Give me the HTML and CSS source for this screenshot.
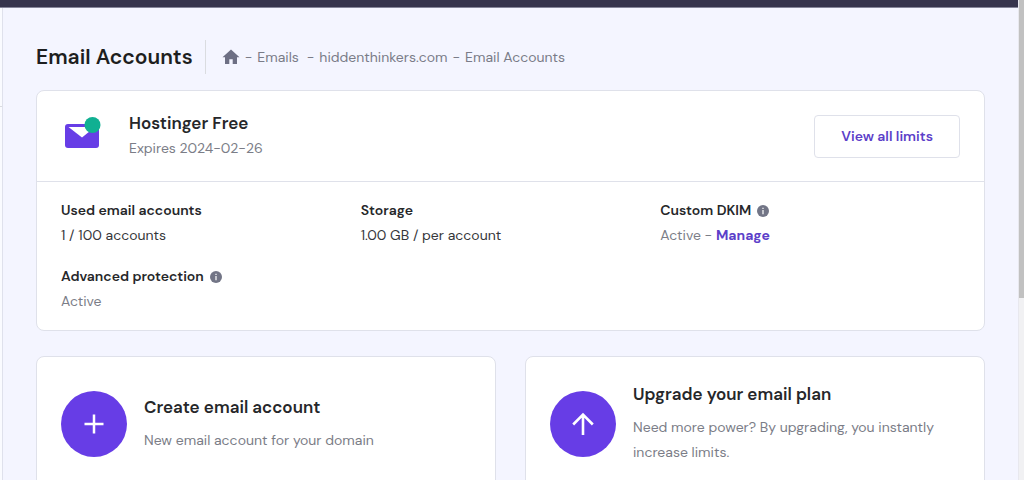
FILE: index.html
```html
<!DOCTYPE html>
<html lang="en">
<head>
<meta charset="utf-8">
<title>Email Accounts</title>
<link rel="stylesheet" href="styles.css">
</head>
<body>
<div class="page">
  <div class="view">
    <div class="topbar"></div>
    <div class="shell">
      <aside class="sidebar"><div class="sidebar-head"></div></aside>
      <main class="main">
        <header class="page-head">
          <h1 class="page-title">Email Accounts</h1>
          <nav class="crumbs" aria-label="Breadcrumb">
            <a class="crumb-home" href="#" aria-label="Home"><svg width="18" height="16" viewBox="0 0 18 16"><path d="M9 0.500 17.500 8.300H15V15h-4.300v-4.800H7.300V15H3V8.300H.5z" fill="currentColor"/></svg></a>
            <span>-</span>
            <a class="crumb crumb-section" href="#">Emails</a>
            <span>-</span>
            <a class="crumb" href="#">hiddenthinkers.com</a>
            <span>-</span>
            <span>Email Accounts</span>
          </nav>
        </header>

        <section class="card">
          <div class="plan">
            <svg class="plan-icon" width="40" height="32" viewBox="0 0 40 32"><rect x="4" y="7" width="34" height="24" rx="3" fill="#673de6"/><path d="M7.500 10H34L21 20.500z" fill="#fff"/><circle cx="31.500" cy="8" r="8" fill="#10b092"/></svg>
            <div class="plan-text">
              <h2 class="heading">Hostinger Free</h2>
              <p class="muted">Expires 2024-02-26</p>
            </div>
            <button class="button" type="button">View all limits</button>
          </div>
          <dl class="facts">
            <div><dt>Used email accounts</dt><dd>1 / 100 accounts</dd></div>
            <div><dt>Storage</dt><dd>1.00 GB / per account</dd></div>
            <div><dt>Custom DKIM <svg class="info" width="12" height="12" viewBox="0 0 12 12"><circle cx="6" cy="6" r="6" fill="#727586"/><path d="M5.400 2.800h1.200V4H5.400zM5.400 5h1.200v4.200H5.400z" fill="#fff"/></svg></dt><dd class="muted">Active - <a class="link" href="#">Manage</a></dd></div>
            <div><dt>Advanced protection <svg class="info" width="12" height="12" viewBox="0 0 12 12"><circle cx="6" cy="6" r="6" fill="#727586"/><path d="M5.400 2.800h1.200V4H5.400zM5.400 5h1.200v4.200H5.400z" fill="#fff"/></svg></dt><dd class="muted">Active</dd></div>
          </dl>
        </section>

        <div class="actions">
          <section class="card action">
            <svg class="action-icon" width="66" height="66" viewBox="0 0 66 66"><circle cx="33" cy="33" r="33" fill="#673de6"/><path d="M33 23.500v19M23.500 33h19" stroke="#fff" stroke-width="2.500" fill="none"/></svg>
            <div class="action-text">
              <h2 class="heading">Create email account</h2>
              <p class="muted">New email account for your domain</p>
            </div>
          </section>
          <section class="card action">
            <svg class="action-icon" width="66" height="66" viewBox="0 0 66 66"><circle cx="33" cy="33" r="33" fill="#673de6"/><path d="M33 44V24M23.200 33.500l9.800-9.800 9.800 9.800" stroke="#fff" stroke-width="2.600" fill="none"/></svg>
            <div class="action-text">
              <h2 class="heading">Upgrade your email plan</h2>
              <p class="muted">Need more power? By upgrading, you instantly increase limits.</p>
            </div>
          </section>
        </div>
      </main>
    </div>
  </div>
  <div class="scrollbar"><div class="scrollbar-thumb"></div></div>
</div>
</body>
</html>
```
FILE: styles.css
```css
* { box-sizing: border-box; }

body {
  margin: 0;
  background: #f4f5ff;
  color: #36373b;
  font-family: "DM Sans", Inter, sans-serif;
  font-size: 14px;
  line-height: 25px;
}

h1, h2, p, dl, dd { margin: 0; }
a { color: inherit; text-decoration: none; }
svg { display: block; flex: none; }

.page { display: flex; height: 100vh; overflow: hidden; }
.view { flex: 1; min-width: 0; display: flex; flex-direction: column; }
.topbar { flex: none; height: 8px; background: #36344d; border-bottom: 1px solid #85859a; }
.shell { flex: 1; display: flex; min-height: 0; }
.sidebar { flex: none; width: 3px; background: #fafbff; border-right: 1px solid #dfe1ec; }
.sidebar-head { height: 99px; border-bottom: 1px solid #dadce0; }
.main { flex: 1; min-width: 0; padding: 32px 33px; }

.scrollbar { flex: none; width: 6px; background: #f1f1f3; border-left: 1px solid #e8e8ee; }
.scrollbar-thumb { height: 62vh; background: #c1c1c1; }

.page-head { display: flex; align-items: center; height: 34px; margin-bottom: 16px; }
.page-title { font-size: 21px; font-weight: 600; color: #1d1e20; }
.crumbs {
  display: flex;
  align-items: center;
  align-self: stretch;
  gap: 5px;
  margin-left: 12px;
  padding-left: 16px;
  border-left: 1px solid #dadce0;
  color: #7a7c88;
}
.crumb-home { color: #6d6f84; }
.crumb-section { margin-right: 3px; }

.card { background: #fff; border: 1px solid #dfe1ea; border-radius: 8px; }

.plan { display: flex; align-items: center; padding: 20px 24px; border-bottom: 1px solid #dfe1ea; }
.plan-icon { margin: 0 28px 6px 0; }
.plan-text { flex: 1; }
.heading { font-size: 17px; font-weight: 600; line-height: 25px; color: #26272a; }
.muted { color: #7b7d87; }
.button {
  padding: 8px 26px;
  border: 1px solid #dfe1ea;
  border-radius: 4px;
  background: #fff;
  color: #5c3fc9;
  font: inherit;
  font-weight: 600;
}

.facts { display: grid; grid-template-columns: repeat(3, 1fr); row-gap: 16px; padding: 16px 24px; }
.facts dt { display: flex; align-items: center; gap: 6px; font-weight: 600; color: #26272a; }
.link { color: #5c3fc9; font-weight: 700; }

.actions { display: grid; grid-template-columns: 1fr 1fr; gap: 29px; margin-top: 25px; }
.action { display: flex; align-items: center; gap: 17px; padding: 25px 24px; }
.action-text { display: grid; gap: 8px; }
```
